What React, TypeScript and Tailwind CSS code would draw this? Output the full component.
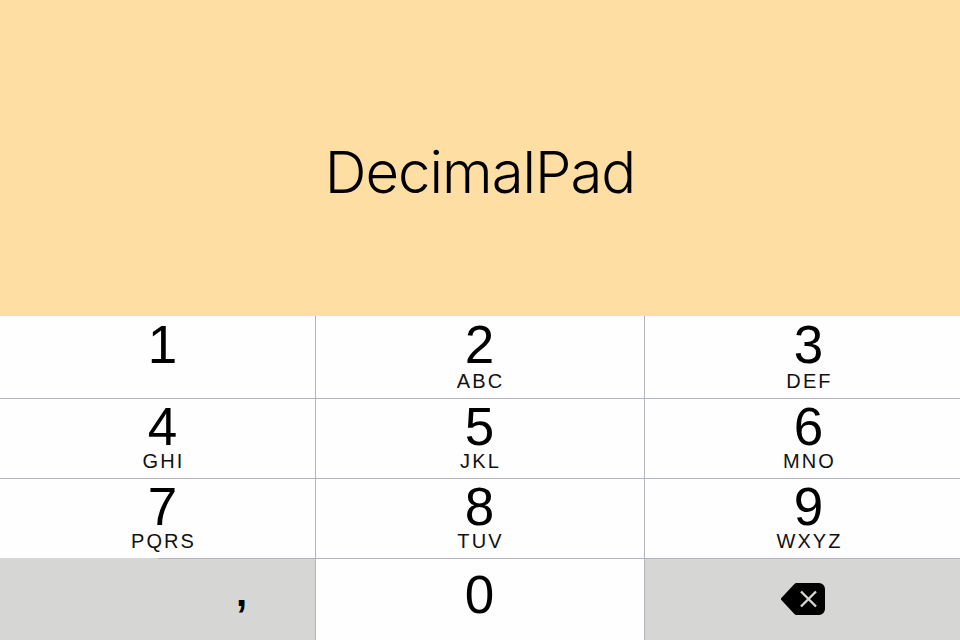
const keys = [
  [
    { digit: "1", letters: "" },
    { digit: "2", letters: "ABC" },
    { digit: "3", letters: "DEF" },
  ],
  [
    { digit: "4", letters: "GHI" },
    { digit: "5", letters: "JKL" },
    { digit: "6", letters: "MNO" },
  ],
  [
    { digit: "7", letters: "PQRS" },
    { digit: "8", letters: "TUV" },
    { digit: "9", letters: "WXYZ" },
  ],
];

const Key = ({
  digit,
  letters,
  tall,
  className,
}: {
  digit: string;
  letters: string;
  tall: boolean;
  className: string;
}) => (
  <div className={`flex flex-col items-center border-[#b1b5c0] bg-[#fefefe] ${className}`}>
    <div className={`${tall ? "mt-[2px]" : "mt-[1px]"} text-[53px] leading-[53px] text-black`}>{digit}</div>
    {letters ? (
      <div className={`${tall ? "mt-[-1px]" : "mt-[-3px]"} pl-[2px] text-[20px] leading-[22px] tracking-[2.1px] text-[#111]`}>
        {letters}
      </div>
    ) : null}
  </div>
);

const Backspace = () => (
  <svg width="44" height="32" viewBox="0 0 44 32">
    <path
      d="M15.5 0H38a6 6 0 0 1 6 6v20a6 6 0 0 1-6 6H15.5a3 3 0 0 1-2.1-.9L.8 17.6a2.2 2.2 0 0 1 0-3.2L13.4.9A3 3 0 0 1 15.5 0z"
      fill="#000"
    />
    <path d="M20 8.5l15 15M35 8.5l-15 15" stroke="#d6d6d5" strokeWidth="2.4" fill="none" />
  </svg>
);

export default function App() {
  return (
    <div className="flex h-[640px] w-[960px] flex-col overflow-hidden font-['Liberation_Sans',Arial,sans-serif]">
      <div className="flex h-[316px] items-center justify-center bg-[#fedea3] pt-[28px]">
        <span className="font-['Inter',sans-serif] text-[58px] font-light leading-none tracking-[-1px] text-black">
          DecimalPad
        </span>
      </div>
      {keys.map((row, i) => (
        <div key={i} className={`flex ${i === 0 ? "h-[83px]" : "h-[80px]"}`}>
          <Key {...row[0]} tall={i === 0} className={`w-[316px] pl-[10px] border-r ${i === 2 ? "" : "border-b"}`} />
          <Key {...row[1]} tall={i === 0} className="w-[329px] pr-[1px] border-r border-b" />
          <Key {...row[2]} tall={i === 0} className="flex-1 pl-[12px] border-b" />
        </div>
      ))}
      <div className="flex h-[81px]">
        <div className="mt-[-1px] flex h-[82px] w-[316px] border-r border-[#b1b5c0] bg-[#d6d6d5]">
          <div className="w-[158px]" />
          <div className="flex flex-1 justify-center border-t border-[#b1b5c0] pl-[10px]">
            <span className="mt-[13px] text-[40px] font-bold leading-[40px] text-black">,</span>
          </div>
        </div>
        <div className="flex w-[329px] justify-center border-r border-[#b1b5c0] bg-[#fefefe] pr-[1px]">
          <span className="mt-[9px] text-[53px] leading-[53px] text-black">0</span>
        </div>
        <div className="flex flex-1 items-start justify-center bg-[#d6d6d5] pt-[24px]">
          <Backspace />
        </div>
      </div>
    </div>
  );
}
